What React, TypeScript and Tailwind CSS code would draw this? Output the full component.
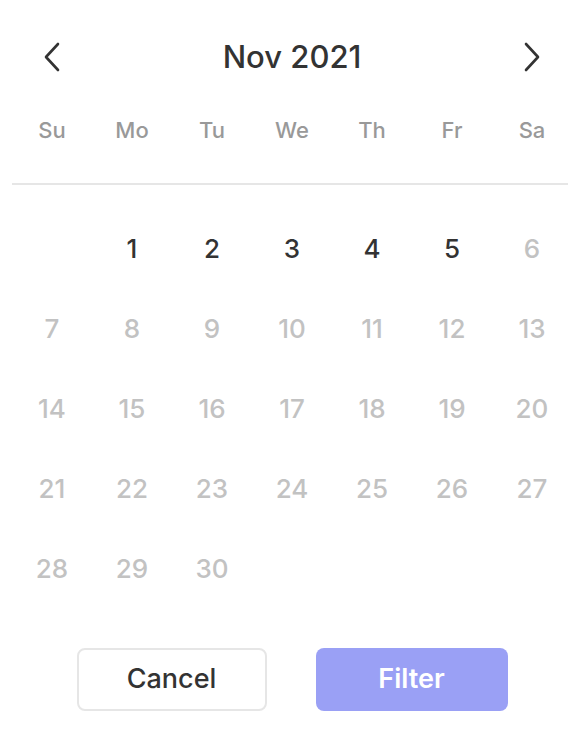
import React from "react";

const weekdays = ["Su", "Mo", "Tu", "We", "Th", "Fr", "Sa"];

export default function App() {
  const cells: (number | null)[] = [null];
  for (let d = 1; d <= 30; d++) cells.push(d);
  return (
    <div className="w-[568px] h-[736px] bg-white overflow-hidden" style={{ fontFamily: 'Inter, "Liberation Sans", Arial, sans-serif' }}>
      <div className="ml-3 w-[560px] flex flex-col">
        <div className="h-[90px] pt-[24px] flex items-start justify-between">
          <button className="w-[80px] h-[66px] flex items-center justify-center text-[#333]">
            <svg width="18" height="30" viewBox="0 0 18 30" fill="none" stroke="currentColor" strokeWidth="2.6" strokeLinecap="round" strokeLinejoin="round">
              <path d="M15 2 L3 15 L15 28" />
            </svg>
          </button>
          <div className="h-[66px] flex items-center text-[31px] font-medium text-[#333]">Nov 2021</div>
          <button className="w-[80px] h-[66px] flex items-center justify-center text-[#333]">
            <svg width="18" height="30" viewBox="0 0 18 30" fill="none" stroke="currentColor" strokeWidth="2.6" strokeLinecap="round" strokeLinejoin="round">
              <path d="M3 2 L15 15 L3 28" />
            </svg>
          </button>
        </div>
        <div className="grid grid-cols-7 h-[93px] pt-[20px] items-start">
          {weekdays.map((w) => (
            <div key={w} className="h-[40px] flex items-center justify-center text-[22px] font-medium text-[#999]">{w}</div>
          ))}
        </div>
        <div className="h-[2px] bg-[#e6e6e6]" />
        <div className="grid grid-cols-7 pt-[23px]">
          {cells.map((d, i) => (
            <div key={i} className={`h-[80px] flex items-center justify-center text-[26px] font-medium ${d !== null && d <= 5 ? "text-[#333]" : "text-[#c2c2c2]"}`}>
              {d ?? ""}
            </div>
          ))}
        </div>
        <div className="mt-[40px] flex justify-center gap-[49px]">
          <button className="w-[190px] h-[63px] rounded-[8px] border-2 border-[#e6e6e6] text-[27px] font-medium text-[#333]">Cancel</button>
          <button className="w-[192px] h-[63px] rounded-[8px] bg-[#9aa0f5] text-[27px] font-semibold text-white">Filter</button>
        </div>
      </div>
    </div>
  );
}
